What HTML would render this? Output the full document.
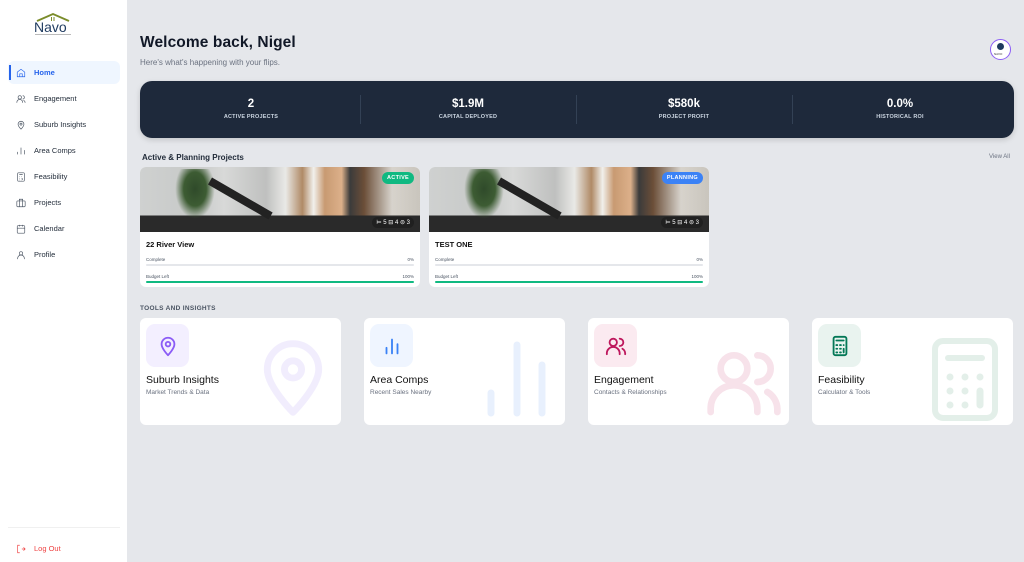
<!DOCTYPE html>
<html><head><meta charset="utf-8"><style>
*{box-sizing:border-box;margin:0;padding:0}
body{width:1024px;height:562px;overflow:hidden;background:#e5e7eb;font-family:"Liberation Sans",sans-serif;position:relative;color:#111827}
.sb{position:absolute;left:0;top:0;width:128px;height:562px;background:#fff;border-right:1px solid #e5e7eb}
.nav{position:absolute;left:8px;width:112px;height:23px;display:flex;align-items:center;font-size:7.5px;color:#1f2937}
.nav svg{width:10px;height:10px;margin:0 8px 0 8px;fill:none;stroke:#4b5563;stroke-width:1.6}
.nav.act{background:#eff6ff;color:#2563eb;border-radius:6px;font-weight:bold}
.nav.act svg{stroke:#2563eb}
.nav.act:before{content:"";position:absolute;left:1px;top:4px;width:1.5px;height:15px;background:#2563eb}
.abs{position:absolute}
.stats{position:absolute;left:140px;top:81px;width:874px;height:57px;background:#1e293b;border-radius:12px;box-shadow:0 2px 6px rgba(0,0,0,.15)}
.st{position:absolute;top:0;width:216px;height:57px;text-align:center;color:#fff}
.st b{display:block;font-size:11.5px;margin-top:17px;font-weight:900}
.st span{display:block;font-size:5.5px;color:#cbd5e1;margin-top:4px;letter-spacing:.2px;font-weight:bold}
.dv{position:absolute;top:14px;width:1px;height:29px;background:#334155}
.card{position:absolute;top:167px;width:280px;height:120px;background:#fff;border-radius:6px;overflow:hidden}
.img{height:65px;position:relative;background:
linear-gradient(180deg,transparent 75%,#2a2a2a 75%),
linear-gradient(90deg,#cfd1d0 0%,#c7c9c8 20%,#d8d9d8 30%,#bfc0bf 45%,#e9e9e6 52%,#b08a66 58%,#f1f0ec 62%,#c89a72 66%,#dcb08a 72%,#3b3b3b 75%,#6b4e38 80%,#d7d3cc 90%,#c9c5bd 100%)}
.plant{position:absolute;left:35px;top:2px;width:40px;height:50px;background:radial-gradient(ellipse at 50% 40%,#2f4a2a 0,#3d5c33 40%,transparent 70%)}
.stair{position:absolute;left:70px;top:10px;width:70px;height:8px;background:#222;transform:rotate(30deg);transform-origin:left}
.badge{position:absolute;right:6px;top:5px;color:#fff;font-size:5.5px;font-weight:bold;padding:3px 5px;border-radius:7px;letter-spacing:.3px}
.meta{position:absolute;right:6px;bottom:4px;background:rgba(30,30,30,.85);color:#fff;font-size:6px;padding:2px 4px;border-radius:6px}
.ct{font-size:7.5px;padding:8px 6px 0;color:#111;font-weight:bold}
.row{display:flex;justify-content:space-between;font-size:4.5px;color:#4b5563;padding:0 6px;margin-top:8px}
.bar{height:2px;margin:2px 6px 0;background:#e5e7eb;border-radius:2px}
.tool{position:absolute;top:318px;width:201px;height:107px;background:#fff;border-radius:6px;overflow:hidden}
.ic{position:absolute;left:6px;top:6px;width:43px;height:43px;border-radius:9px;display:flex;align-items:center;justify-content:center}
.ic svg{width:22px;height:22px;fill:none;stroke-width:2;stroke-linecap:round;stroke-linejoin:round}
.tt{position:absolute;left:6px;top:56px;font-size:10.5px;color:#111}
.ts{position:absolute;left:6px;top:71px;font-size:6.5px;color:#6b7280}
.big{position:absolute;fill:none;stroke-linecap:round;stroke-linejoin:round}
</style></head><body>
<div class="sb">
 <svg class="abs" style="left:35px;top:12px" width="36" height="12" viewBox="0 0 36 12"><path d="M2 9 L18 2 L34 9" stroke="#7a8c2a" stroke-width="1.8" fill="none"/><rect x="16" y="5" width="1" height="4" fill="#7a8c2a"/><rect x="18.5" y="5" width="1" height="4" fill="#7a8c2a"/></svg>
 <div class="abs" style="left:34px;top:19px;font-size:14px;color:#1e3a5f">Navo</div>
 <div class="abs" style="left:35px;top:34px;width:36px;height:1px;background:#bbb"></div>
 <div class="nav act" style="top:61px"><svg viewBox="0 0 24 24"><path d="M3 10l9-7 9 7v11H3z M9 21v-7h6v7"/></svg>Home</div>
 <div class="nav" style="top:87px"><svg viewBox="0 0 24 24"><circle cx="9" cy="8" r="4"/><path d="M2 21v-1a7 7 0 0114 0v1M16 4a4 4 0 010 8M22 21a7 7 0 00-4-6"/></svg>Engagement</div>
 <div class="nav" style="top:113px"><svg viewBox="0 0 24 24"><path d="M12 22s-7-7-7-12a7 7 0 0114 0c0 5-7 12-7 12z"/><circle cx="12" cy="10" r="2.5"/></svg>Suburb Insights</div>
 <div class="nav" style="top:139px"><svg viewBox="0 0 24 24"><path d="M4 20v-6M12 20V4M20 20V10"/></svg>Area Comps</div>
 <div class="nav" style="top:165px"><svg viewBox="0 0 24 24"><rect x="4" y="2" width="16" height="20" rx="2"/><path d="M8 6h8M8 11h1M12 11h1M16 11h0M8 15h1M12 15h1M8 19h1M12 19h1M16 15v4"/></svg>Feasibility</div>
 <div class="nav" style="top:191px"><svg viewBox="0 0 24 24"><rect x="2" y="7" width="20" height="14" rx="2"/><path d="M8 7V3h8v4M8 7v14M16 7v14"/></svg>Projects</div>
 <div class="nav" style="top:217px"><svg viewBox="0 0 24 24"><rect x="3" y="4" width="18" height="18" rx="2"/><path d="M3 10h18M8 2v4M16 2v4"/></svg>Calendar</div>
 <div class="nav" style="top:243px"><svg viewBox="0 0 24 24"><circle cx="12" cy="8" r="4"/><path d="M4 22v-2a6 6 0 0116 0v2"/></svg>Profile</div>
 <div class="abs" style="left:8px;top:527px;width:112px;height:1px;background:#f0f0f0"></div>
 <div class="nav" style="top:537px;color:#ef4444"><svg viewBox="0 0 24 24" style="stroke:#ef4444"><path d="M9 3H4v18h5M14 12h8M18 8l4 4-4 4"/></svg>Log Out</div>
</div>

<div class="abs" style="left:140px;top:34px;font-size:15.5px;font-weight:900;color:#111827;letter-spacing:.1px">Welcome back, Nigel</div>
<div class="abs" style="left:140px;top:58px;font-size:8px;color:#6b7280">Here's what's happening with your flips.</div>
<div class="abs" style="left:990px;top:39px;width:21px;height:21px;border-radius:50%;border:1.5px solid #8b5cf6;background:#fff"><div style="position:absolute;left:6px;top:3px;width:7px;height:7px;border-radius:50%;background:#1e3a5f"></div><div style="position:absolute;left:3px;top:12px;font-size:3px;color:#333">NAVO</div></div>

<div class="stats">
 <div class="st" style="left:3px"><b>2</b><span>ACTIVE PROJECTS</span></div>
 <div class="dv" style="left:220px"></div>
 <div class="st" style="left:220px"><b>$1.9M</b><span>CAPITAL DEPLOYED</span></div>
 <div class="dv" style="left:436px"></div>
 <div class="st" style="left:436px"><b>$580k</b><span>PROJECT PROFIT</span></div>
 <div class="dv" style="left:652px"></div>
 <div class="st" style="left:652px"><b>0.0%</b><span>HISTORICAL ROI</span></div>
</div>

<div class="abs" style="left:142px;top:153px;font-size:8px;font-weight:bold;color:#1f2937">Active &amp; Planning Projects</div>
<div class="abs" style="left:989px;top:154px;font-size:6px;color:#6b7280">View All</div>

<div class="card" style="left:140px">
 <div class="img"><div class="plant"></div><div class="stair"></div><div class="badge" style="background:#10b981">ACTIVE</div><div class="meta">⊨ 5 ⊟ 4 ⊜ 3</div></div>
 <div class="ct">22 River View</div>
 <div class="row"><span>Complete</span><span>0%</span></div><div class="bar"></div>
 <div class="row"><span>Budget Left</span><span>100%</span></div><div class="bar" style="background:#10b981"></div>
</div>
<div class="card" style="left:429px">
 <div class="img"><div class="plant"></div><div class="stair"></div><div class="badge" style="background:#3b82f6">PLANNING</div><div class="meta">⊨ 5 ⊟ 4 ⊜ 3</div></div>
 <div class="ct">TEST ONE</div>
 <div class="row"><span>Complete</span><span>0%</span></div><div class="bar"></div>
 <div class="row"><span>Budget Left</span><span>100%</span></div><div class="bar" style="background:#10b981"></div>
</div>

<div class="abs" style="left:140px;top:305px;font-size:6.5px;font-weight:bold;color:#4b5563;letter-spacing:.3px">TOOLS AND INSIGHTS</div>

<div class="tool" style="left:140px">
 <svg class="big" style="left:118px;top:20px" width="70" height="80" viewBox="0 0 24 28"><path d="M12 26s-9-9-9-15a9 9 0 0118 0c0 6-9 15-9 15z" stroke="#f1edfd" stroke-width="2.4"/><circle cx="12" cy="11" r="3" stroke="#f1edfd" stroke-width="2.4"/></svg>
 <div class="ic" style="background:#f3efff"><svg viewBox="0 0 24 24" stroke="#8b5cf6"><path d="M12 22s-7-7-7-12a7 7 0 0114 0c0 5-7 12-7 12z"/><circle cx="12" cy="10" r="2.5"/></svg></div>
 <div class="tt">Suburb Insights</div><div class="ts">Market Trends &amp; Data</div>
</div>
<div class="tool" style="left:364px">
 <svg class="big" style="left:120px;top:20px" width="70" height="80" viewBox="0 0 70 80"><path d="M7 55v20M33 7v68M58 27v48" stroke="#e8f0fd" stroke-width="7"/></svg>
 <div class="ic" style="background:#eff5ff"><svg viewBox="0 0 24 24" stroke="#3b82f6"><path d="M6 20v-6M12 20V5M18 20v-10"/></svg></div>
 <div class="tt">Area Comps</div><div class="ts">Recent Sales Nearby</div>
</div>
<div class="tool" style="left:588px">
 <svg class="big" style="left:116px;top:24px" width="80" height="80" viewBox="0 0 24 24"><circle cx="9" cy="8" r="4" stroke="#f7e2ea" stroke-width="2"/><path d="M2 21v-1a7 7 0 0114 0v1M16 4a4 4 0 010 8M22 21v-1a6 6 0 00-3-5" stroke="#f7e2ea" stroke-width="2"/></svg>
 <div class="ic" style="background:#fbeaf0"><svg viewBox="0 0 24 24" stroke="#be185d"><circle cx="9" cy="8" r="4"/><path d="M2 21v-1a7 7 0 0114 0v1M16 4a4 4 0 010 8M22 21v-1a6 6 0 00-3-5"/></svg></div>
 <div class="tt">Engagement</div><div class="ts">Contacts &amp; Relationships</div>
</div>
<div class="tool" style="left:812px">
 <svg class="big" style="left:118px;top:18px" width="70" height="90" viewBox="0 0 70 90"><rect x="5" y="5" width="60" height="77" rx="8" stroke="#e3efe9" stroke-width="6"/><path d="M18 22h34" stroke="#e3efe9" stroke-width="6"/><g fill="#e3efe9"><circle cx="20" cy="41" r="3.5"/><circle cx="35" cy="41" r="3.5"/><circle cx="50" cy="41" r="3.5"/><circle cx="20" cy="55" r="3.5"/><circle cx="35" cy="55" r="3.5"/><circle cx="20" cy="69" r="3.5"/><circle cx="35" cy="69" r="3.5"/></g><path d="M50 55v14" stroke="#e3efe9" stroke-width="7"/></svg>
 <div class="ic" style="background:#e9f3ef"><svg viewBox="0 0 24 24" stroke="#047857"><rect x="5" y="2" width="14" height="20" rx="2"/><path d="M8 6h8M8 11h1M12 11h1M16 11h0M8 15h1M12 15h1M8 19h1M12 19h1M16 15v4"/></svg></div>
 <div class="tt">Feasibility</div><div class="ts">Calculator &amp; Tools</div>
</div>
</body></html>
